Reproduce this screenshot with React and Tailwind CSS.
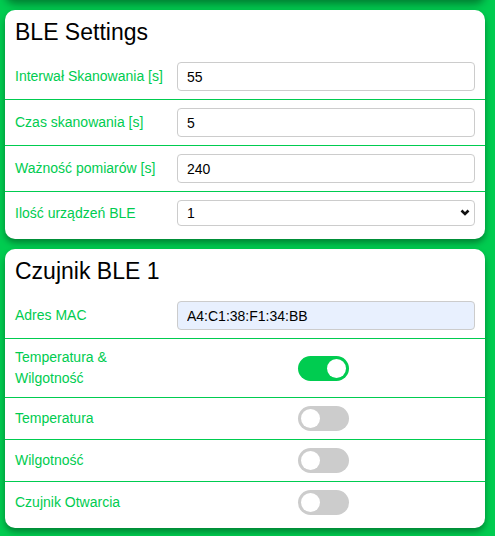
import React, { useState } from 'react';

const font = { fontFamily: '"Liberation Sans", Arial, sans-serif' };

const Toggle = ({ on, onChange }) => (
    <button
        type="button"
        onClick={() => onChange(!on)}
        className={`ml-[121px] relative block w-[51px] h-[25px] rounded-full ${on ? 'bg-[#00cc50]' : 'bg-[#cccccc]'}`}
    >
        <span
            className={`absolute top-[3px] w-[19px] h-[19px] rounded-full bg-white ${on ? 'left-[29px]' : 'left-[3px]'}`}
        />
    </button>
);

const Row = ({ label, last, children }) => (
    <div className={`flex items-center px-[10px] py-[8px] ${last ? '' : 'border-b border-[#00cc50]'}`}>
        <div className="w-[162px] shrink-0 text-[14px] leading-[21px] text-[#00cc50]">{label}</div>
        <div className="flex-1 flex items-center">{children}</div>
    </div>
);

const TextInput = ({ value, autofill }) => (
    <input
        type="text"
        defaultValue={value}
        className={`block w-full h-[29px] rounded-[4px] border border-[#cccccc] px-[9px] text-[14px] text-black outline-none ${autofill ? 'bg-[#e8f0fe]' : 'bg-white'}`}
        style={font}
    />
);

const Card = ({ title, children }) => (
    <div className="ml-[5px] w-[480px] rounded-[10px] bg-white pb-[5px] shadow-[0_4px_6px_rgba(0,0,0,0.35)]">
        <div className="px-[10px] pt-[9px] pb-[9px] text-[23px] leading-[26px] text-black">{title}</div>
        {children}
    </div>
);

export default function App() {
    const [toggles, setToggles] = useState({ tw: true, t: false, w: false, o: false });
    const set = (key) => (val) => setToggles((prev) => ({ ...prev, [key]: val }));

    return (
        <div className="min-h-[536px] bg-[#00cc50] overflow-hidden" style={font}>
            {/* bottom edge of the card above, scrolled out of view */}
            <div className="ml-[5px] w-[480px] -mt-[20px] h-[20px] rounded-[10px] bg-white shadow-[0_4px_8px_rgba(0,0,0,0.4)]" />
            <div className="flex flex-col gap-[10px] pt-[10px] pb-[10px]">
                <Card title="BLE Settings">
                    <Row label="Interwał Skanowania [s]">
                        <TextInput value="55" />
                    </Row>
                    <Row label="Czas skanowania [s]">
                        <TextInput value="5" />
                    </Row>
                    <Row label="Ważność pomiarów [s]">
                        <TextInput value="240" />
                    </Row>
                    <Row label="Ilość urządzeń BLE" last>
                        <div className="relative w-full">
                            <select
                                defaultValue="1"
                                className="block w-full h-[26px] appearance-none rounded-[4px] border border-[#cccccc] bg-white px-[9px] text-[14px] text-black outline-none"
                                style={font}
                            >
                                <option value="1">1</option>
                                <option value="2">2</option>
                                <option value="3">3</option>
                            </select>
                            <svg
                                className="pointer-events-none absolute right-[5px] top-[9px]"
                                width="10"
                                height="7"
                                viewBox="0 0 10 7"
                            >
                                <path d="M1.5 1.5 L5 5 L8.5 1.5" fill="none" stroke="#111" strokeWidth="2.6" />
                            </svg>
                        </div>
                    </Row>
                </Card>

                <Card title="Czujnik BLE 1">
                    <Row label="Adres MAC">
                        <TextInput value="A4:C1:38:F1:34:BB" autofill />
                    </Row>
                    <Row label={<>Temperatura &amp;<br />Wilgotność</>}>
                        <Toggle on={toggles.tw} onChange={set('tw')} />
                    </Row>
                    <Row label="Temperatura">
                        <Toggle on={toggles.t} onChange={set('t')} />
                    </Row>
                    <Row label="Wilgotność">
                        <Toggle on={toggles.w} onChange={set('w')} />
                    </Row>
                    <Row label="Czujnik Otwarcia" last>
                        <Toggle on={toggles.o} onChange={set('o')} />
                    </Row>
                </Card>
            </div>
        </div>
    );
}
